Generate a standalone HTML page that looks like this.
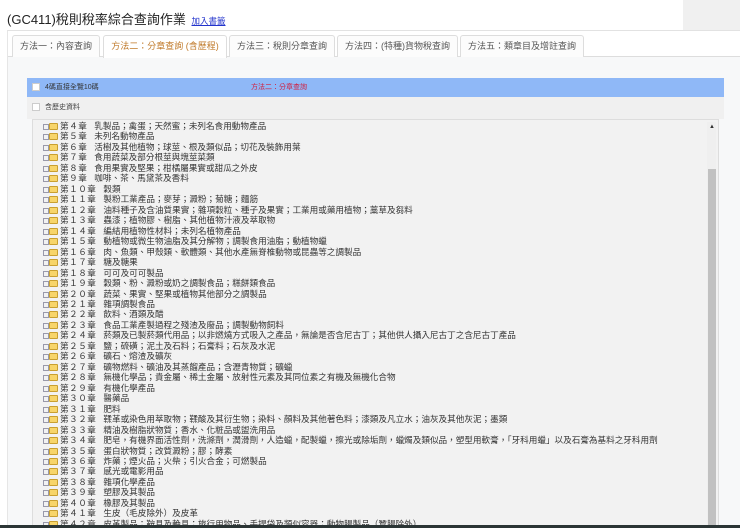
<!DOCTYPE html>
<html><head><meta charset="utf-8"><style>
*{margin:0;padding:0;box-sizing:border-box}
body{width:740px;height:528px;overflow:hidden;background:#fff;font-family:"Liberation Sans","Noto Sans CJK TC",sans-serif;position:relative}
.title{position:absolute;left:7px;top:9px;font-size:13px;color:#222;white-space:nowrap}
.title a{font-size:8.5px;color:#2233cc;text-decoration:underline;margin-left:2px}
.gbox{position:absolute;left:683px;top:0;width:57px;height:30px;background:#f0f0f0}
.content{position:absolute;left:7px;top:30px;width:733px;height:498px;background:#f7f8f9;border-top:1px solid #e2e2e2;border-left:1px solid #e6e6e6}
.tabs{position:absolute;left:0;top:0;width:733px;height:26px;border-bottom:1px solid #ddd;background:#fff}
.tab{position:absolute;top:4px;height:22px;border:1px solid #ddd;border-bottom:none;border-radius:3px 3px 0 0;background:#fcfcfc;font-size:9px;color:#555;line-height:21px;text-align:center;white-space:nowrap}
.tab.act{color:#c07a2a;background:#fff;height:23px}
.bar{position:absolute;left:27px;top:78px;width:697px;height:19px;background:#8fb8f7;font-size:7px;color:#333;line-height:19px}
.cb{position:absolute;width:8px;height:8px;background:#fff;border:1px solid #ccc}
.row2{position:absolute;left:27px;top:97px;width:697px;height:22px;background:#f0f0f0;font-size:7px;color:#444}
.list{position:absolute;left:32px;top:119px;width:687px;height:409px;background:#f2f2f2;border:1px solid #ddd}
.sb{position:absolute;left:707px;top:122px;width:9px;height:406px;background:#efefef}
.thumb{position:absolute;left:708px;top:169px;width:8px;height:359px;background:#c1c1c1}
.items{position:absolute;left:43px;top:121px;font-size:8.6px;color:#333;line-height:10.47px;white-space:nowrap}
.it{height:10.47px;position:relative;padding-left:17px}
.it:before{content:"";position:absolute;left:0;top:3px;width:4px;height:4px;border:1px solid #99a}
.it i{position:absolute;left:6px;top:2px;width:9px;height:7px;background:#f7d56a;border:1px solid #c9a030;border-radius:1px}
.it b{display:inline-block;font-weight:normal;letter-spacing:0.5px;margin-right:7px}
.bot{position:absolute;left:0;top:525px;width:740px;height:3px;background:#2b3535}
</style></head><body>
<div class="title">(GC411)稅則稅率綜合查詢作業 <a>加入書籤</a></div>
<div class="gbox"></div>
<div class="content">
<div class="tabs">
<div class="tab" style="left:4px;width:88px">方法一：內容查詢</div>
<div class="tab act" style="left:95px;width:124px">方法二：分章查詢 (含歷程)</div>
<div class="tab" style="left:221px;width:106px">方法三：稅則分章查詢</div>
<div class="tab" style="left:329px;width:121px">方法四：(特種)貨物稅查詢</div>
<div class="tab" style="left:452px;width:124px">方法五：類章目及增註查詢</div>
</div>
</div>
<div class="bar"><div class="cb" style="left:5px;top:5px"></div><span style="position:absolute;left:18px">4碼直接全覽10碼</span><span style="position:absolute;left:224px;color:#d02040">方法二：分章查詢</span></div>
<div class="row2"><div class="cb" style="left:5px;top:6px"></div><span style="position:absolute;left:18px;top:5px">含歷史資料</span></div>
<div class="list"></div>
<div class="sb"></div><div class="thumb"></div>
<div style="position:absolute;left:709px;top:124px;font-size:6px;color:#333">▲</div>
<div class="items">
<div class="it"><i></i><b>第４章</b>乳製品；禽蛋；天然蜜；未列名食用動物產品</div>
<div class="it"><i></i><b>第５章</b>未列名動物產品</div>
<div class="it"><i></i><b>第６章</b>活樹及其他植物；球莖、根及類似品；切花及裝飾用葉</div>
<div class="it"><i></i><b>第７章</b>食用蔬菜及部分根莖與塊莖菜類</div>
<div class="it"><i></i><b>第８章</b>食用果實及堅果；柑橘屬果實或甜瓜之外皮</div>
<div class="it"><i></i><b>第９章</b>咖啡、茶、馬黛茶及香料</div>
<div class="it"><i></i><b>第１０章</b>穀類</div>
<div class="it"><i></i><b>第１１章</b>製粉工業產品；麥芽；澱粉；菊糖；麵筋</div>
<div class="it"><i></i><b>第１２章</b>油料種子及含油質果實；雜項穀粒、種子及果實；工業用或藥用植物；藁草及芻料</div>
<div class="it"><i></i><b>第１３章</b>蟲漆；植物膠、樹脂、其他植物汁液及萃取物</div>
<div class="it"><i></i><b>第１４章</b>編結用植物性材料；未列名植物產品</div>
<div class="it"><i></i><b>第１５章</b>動植物或微生物油脂及其分解物；調製食用油脂；動植物蠟</div>
<div class="it"><i></i><b>第１６章</b>肉、魚類、甲殼類、軟體類、其他水產無脊椎動物或昆蟲等之調製品</div>
<div class="it"><i></i><b>第１７章</b>糖及糖果</div>
<div class="it"><i></i><b>第１８章</b>可可及可可製品</div>
<div class="it"><i></i><b>第１９章</b>穀類、粉、澱粉或奶之調製食品；糕餅類食品</div>
<div class="it"><i></i><b>第２０章</b>蔬菜、果實、堅果或植物其他部分之調製品</div>
<div class="it"><i></i><b>第２１章</b>雜項調製食品</div>
<div class="it"><i></i><b>第２２章</b>飲料、酒類及醋</div>
<div class="it"><i></i><b>第２３章</b>食品工業產製過程之殘渣及廢品；調製動物飼料</div>
<div class="it"><i></i><b>第２４章</b>菸類及已製菸類代用品；以非燃燒方式吸入之產品，無論是否含尼古丁；其他供人攝入尼古丁之含尼古丁產品</div>
<div class="it"><i></i><b>第２５章</b>鹽；硫磺；泥土及石料；石膏料；石灰及水泥</div>
<div class="it"><i></i><b>第２６章</b>礦石、熔渣及礦灰</div>
<div class="it"><i></i><b>第２７章</b>礦物燃料、礦油及其蒸餾產品；含瀝青物質；礦蠟</div>
<div class="it"><i></i><b>第２８章</b>無機化學品；貴金屬、稀土金屬、放射性元素及其同位素之有機及無機化合物</div>
<div class="it"><i></i><b>第２９章</b>有機化學產品</div>
<div class="it"><i></i><b>第３０章</b>醫藥品</div>
<div class="it"><i></i><b>第３１章</b>肥料</div>
<div class="it"><i></i><b>第３２章</b>鞣革或染色用萃取物；鞣酸及其衍生物；染料、顏料及其他著色料；漆類及凡立水；油灰及其他灰泥；墨類</div>
<div class="it"><i></i><b>第３３章</b>精油及樹脂狀物質；香水、化粧品或盥洗用品</div>
<div class="it"><i></i><b>第３４章</b>肥皂，有機界面活性劑，洗滌劑，潤滑劑，人造蠟，配製蠟，擦光或除垢劑，蠟燭及類似品，塑型用軟膏，「牙科用蠟」以及石膏為基料之牙科用劑</div>
<div class="it"><i></i><b>第３５章</b>蛋白狀物質；改質澱粉；膠；酵素</div>
<div class="it"><i></i><b>第３６章</b>炸藥；煙火品；火柴；引火合金；可燃製品</div>
<div class="it"><i></i><b>第３７章</b>感光或電影用品</div>
<div class="it"><i></i><b>第３８章</b>雜項化學產品</div>
<div class="it"><i></i><b>第３９章</b>塑膠及其製品</div>
<div class="it"><i></i><b>第４０章</b>橡膠及其製品</div>
<div class="it"><i></i><b>第４１章</b>生皮（毛皮除外）及皮革</div>
<div class="it"><i></i><b>第４２章</b>皮革製品；鞍具及輓具；旅行用物品、手提袋及類似容器；動物腸製品（蠶腸除外）</div>
</div>
<div class="bot"></div>
</body></html>
